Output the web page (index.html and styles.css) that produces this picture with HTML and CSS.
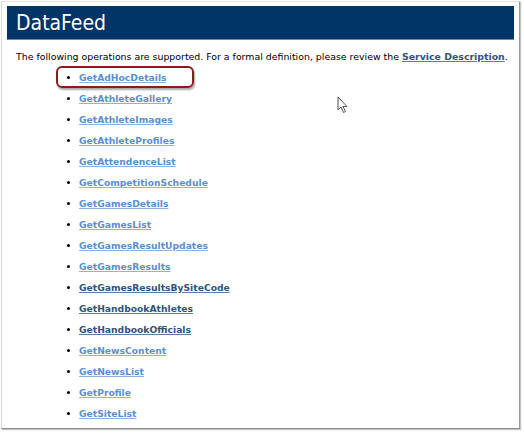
FILE: index.html
```html
<!DOCTYPE html>
<html>
<head>
<meta charset="utf-8">
<link rel="stylesheet" href="styles.css">
</head>
<body>
<div class="frame">
  <div class="content">
    <h1 class="title">DataFeed</h1>
    <p class="intro">The following operations are supported. For a formal definition, please review the <a class="link dark" href="#">Service Description</a>.</p>
    <ul class="ops">
      <li class="op highlighted"><a class="link" href="#">GetAdHocDetails</a></li>
      <li class="op"><a class="link" href="#">GetAthleteGallery</a></li>
      <li class="op"><a class="link" href="#">GetAthleteImages</a></li>
      <li class="op"><a class="link" href="#">GetAthleteProfiles</a></li>
      <li class="op"><a class="link" href="#">GetAttendenceList</a></li>
      <li class="op"><a class="link" href="#">GetCompetitionSchedule</a></li>
      <li class="op"><a class="link" href="#">GetGamesDetails</a></li>
      <li class="op"><a class="link" href="#">GetGamesList</a></li>
      <li class="op"><a class="link" href="#">GetGamesResultUpdates</a></li>
      <li class="op"><a class="link" href="#">GetGamesResults</a></li>
      <li class="op"><a class="link dark" href="#">GetGamesResultsBySiteCode</a></li>
      <li class="op"><a class="link dark" href="#">GetHandbookAthletes</a></li>
      <li class="op"><a class="link dark" href="#">GetHandbookOfficials</a></li>
      <li class="op"><a class="link" href="#">GetNewsContent</a></li>
      <li class="op"><a class="link" href="#">GetNewsList</a></li>
      <li class="op"><a class="link" href="#">GetProfile</a></li>
      <li class="op"><a class="link" href="#">GetSiteList</a></li>
    </ul>
  </div>
  <svg class="cursor" width="12" height="18" viewBox="0 0 12 18">
    <path d="M1 1 L1 14 L4 11 L6.5 16.5 L8.5 15.5 L6 10.5 L10 10.5 Z" fill="#fff" stroke="#555" stroke-width="1" stroke-linejoin="round"/>
  </svg>
</div>
</body>
</html>
```
FILE: styles.css
```css
html, body {
  margin: 0;
  padding: 0;
  background: #ffffff;
}
body {
  font-family: "DejaVu Sans", Verdana, sans-serif;
  width: 524px;
  height: 433px;
  overflow: hidden;
}
.frame {
  position: relative;
  margin: 1px 0 0 1px;
  width: 519px;
  height: 428px;
  border-left: 1px solid #dcdcdc;
  border-top: 1px solid #e4e4e4;
  border-right: 1px solid #9a9a9a;
  border-bottom: 1px solid #8a8a8a;
  box-shadow: 1px 1px 1px #c4c4c4;
  box-sizing: border-box;
}
.content {
  padding: 4px 5px 0 5px;
}
.title {
  margin: 0;
  height: 33px;
  background: #003366;
  color: #ffffff;
  font-family: "DejaVu Sans Condensed", "DejaVu Sans", sans-serif;
  font-weight: normal;
  font-size: 21px;
  line-height: 35px;
  padding-left: 9px;
  border-bottom: 1px solid #6d89a6;
}
.intro {
  margin: 10px 0 0 9px;
  font-size: 9.4px;
  line-height: 14px;
  color: #000;
  white-space: nowrap;
}
.intro .link {
  font-size: 9.4px;
}
.link {
  color: #5b8fd0;
  font-weight: bold;
  text-decoration: underline;
  text-decoration-color: #8fb3e0;
}
.link.dark {
  color: #2f557f;
  text-decoration-color: #5f7ea0;
}
.ops {
  list-style: none;
  margin: 3px 0 0 0;
  padding: 0 0 0 60px;
}
.op {
  position: relative;
  height: 21px;
  line-height: 21px;
  font-size: 9.2px;
  padding-left: 12px;
}
.op::before {
  content: "";
  position: absolute;
  left: 0;
  top: 9px;
  width: 3px;
  height: 3px;
  border-radius: 50%;
  background: #000;
}
.highlighted::after {
  content: "";
  position: absolute;
  left: -11px;
  top: -1px;
  width: 134px;
  height: 18px;
  border: 2px solid #8c1b1e;
  border-radius: 6px;
  box-shadow: 1px 2px 2px rgba(0,0,0,0.35);
}
.cursor {
  position: absolute;
  left: 335px;
  top: 94px;
}
```
